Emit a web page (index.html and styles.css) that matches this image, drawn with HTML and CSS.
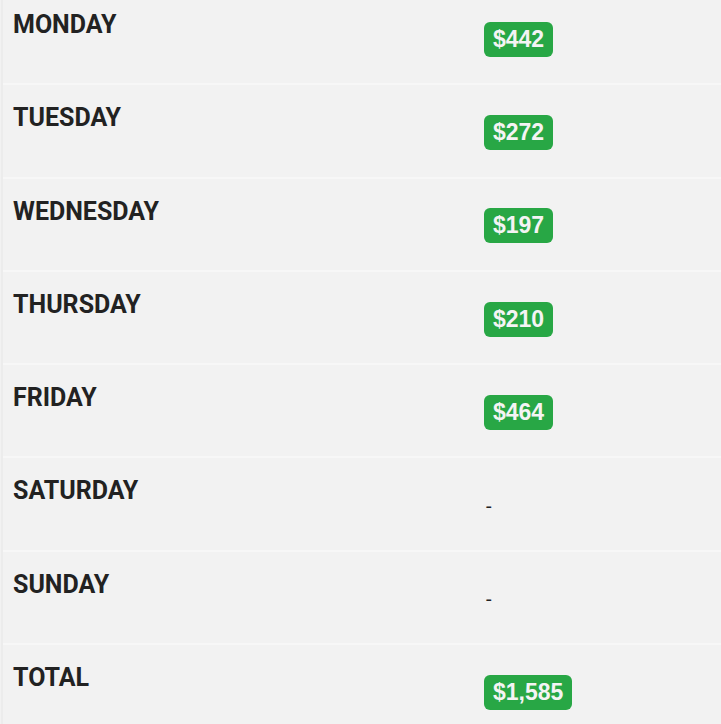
FILE: index.html
```html
<!DOCTYPE html>
<html>
<head>
<meta charset="utf-8">
<link rel="stylesheet" href="styles.css">
</head>
<body>
<div class="table">
  <div class="row"><div class="day">MONDAY</div><div class="val"><span class="badge">$442</span></div></div>
  <div class="row"><div class="day">TUESDAY</div><div class="val"><span class="badge">$272</span></div></div>
  <div class="row"><div class="day">WEDNESDAY</div><div class="val"><span class="badge">$197</span></div></div>
  <div class="row"><div class="day">THURSDAY</div><div class="val"><span class="badge">$210</span></div></div>
  <div class="row"><div class="day">FRIDAY</div><div class="val"><span class="badge">$464</span></div></div>
  <div class="row"><div class="day">SATURDAY</div><div class="val"><span class="dash">-</span></div></div>
  <div class="row"><div class="day">SUNDAY</div><div class="val"><span class="dash">-</span></div></div>
  <div class="row"><div class="day">TOTAL</div><div class="val"><span class="badge">$1,585</span></div></div>
</div>
</body>
</html>
```
FILE: styles.css
```css
html, body {
  margin: 0;
  padding: 0;
  background: #f2f2f2;
}
body {
  overflow: hidden;
  height: 724px;
}
.table {
  margin-top: -8px;
  border-left: 2px solid #ececec;
  margin-left: 1px;
}
.row {
  display: grid;
  grid-template-columns: 481px 1fr;
  height: 93.3px;
  box-sizing: border-box;
  border-bottom: 2px solid #f7f7f7;
}
.day {
  padding: 18px 0 0 10px;
  font-family: Roboto, "Liberation Sans", sans-serif;
  font-weight: 700;
  font-size: 25px;
  line-height: 30px;
  color: #222;
}
.val {
  display: flex;
  align-items: center;
  padding-top: 3px;
}
.badge {
  background: #28a745;
  color: #f4f4f4;
  font-family: "Liberation Sans", Arial, sans-serif;
  font-weight: 700;
  font-size: 23px;
  line-height: 35px;
  padding: 0 9px;
  border-radius: 6px;
}
.dash {
  font-family: Roboto, "Liberation Sans", sans-serif;
  font-size: 20px;
  color: #222;
  padding-left: 2px;
}
```
